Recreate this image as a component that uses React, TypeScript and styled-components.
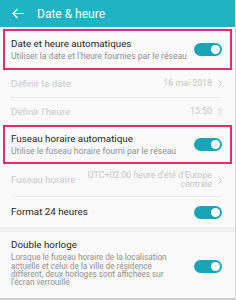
import styled, { createGlobalStyle } from 'styled-components';

const Global = createGlobalStyle`
  html, body {
    margin: 0;
    padding: 0;
    background: #fafafa;
  }
  body {
    font-family: Roboto, "Liberation Sans", sans-serif;
  }
`;

const Screen = styled.div`
  width: 236px;
  height: 300px;
  overflow: hidden;
  background: #fafafa;
  box-sizing: border-box;
  border-right: 1px solid #d8d8d8;
  border-bottom: 2px solid #cfcfcf;
`;

const Header = styled.div`
  height: 27px;
  background: #1fb3c3;
  display: flex;
  align-items: center;
  padding-left: 12px;
  gap: 13px;
  color: #fff;
  font-size: 12px;
  margin-bottom: 2px;
`;

const Highlight = styled.div<{ $h: number }>`
  margin: 0 3px;
  border: 2px solid #dc2f6c;
  height: ${(p) => p.$h}px;
  box-sizing: border-box;
  display: flex;
  align-items: center;
  padding: 0 8px 0 6px;
`;

const Row = styled.div<{ $h: number; $line?: boolean }>`
  height: ${(p) => p.$h}px;
  margin: 0 13px 0 11px;
  display: flex;
  align-items: center;
  box-sizing: border-box;
  border-bottom: ${(p) => (p.$line ? '1px solid #ececec' : 'none')};
`;

const Texts = styled.div`
  flex: 1;
  display: flex;
  flex-direction: column;
`;

const Title = styled.div<{ $muted?: boolean }>`
  font-size: 9.8px;
  line-height: 12px;
  color: ${(p) => (p.$muted ? '#c9c9c9' : '#1e1e1e')};
`;

const Sub = styled.div`
  font-size: 8.6px;
  line-height: 12px;
  color: #8f8f8f;
  white-space: nowrap;
`;

const Desc = styled.div`
  font-size: 8.2px;
  line-height: 8.4px;
  color: #8f8f8f;
  width: 168px;
  margin-top: 2px;
`;

const Value = styled.div`
  display: flex;
  align-items: center;
  gap: 6px;
  font-size: 8.8px;
  line-height: 9.5px;
  color: #c6c6c6;
  text-align: right;
`;

const Gap = styled.div`
  height: 5px;
  background: #efefef;
`;

const Track = styled.div<{ $drop?: number }>`
  width: 28px;
  height: 13px;
  border-radius: 7px;
  background: #18a5b6;
  display: flex;
  align-items: center;
  justify-content: flex-end;
  padding-right: 2px;
  box-sizing: border-box;
  flex-shrink: 0;
  margin-top: ${(p) => p.$drop ?? 0}px;
`;

const Knob = styled.div`
  width: 9px;
  height: 9px;
  border-radius: 50%;
  background: #fff;
`;

const Toggle = ({ drop }: { drop?: number }) => (
  <Track $drop={drop}>
    <Knob />
  </Track>
);

const Chevron = () => (
  <svg width="4" height="7" viewBox="0 0 4 7">
    <path d="M0.5 0.5 L3.5 3.5 L0.5 6.5" fill="none" stroke="#c6c6c6" strokeWidth="0.9" />
  </svg>
);

const BackArrow = () => (
  <svg width="12" height="11" viewBox="0 0 12 11">
    <path d="M12 5.5 H1 M5.5 1 L1 5.5 L5.5 10" fill="none" stroke="#fff" strokeWidth="1.2" />
  </svg>
);

export default function App() {
  return (
    <Screen>
      <Global />
      <Header>
        <BackArrow />
        <span>Date &amp; heure</span>
      </Header>

      <Highlight $h={41}>
        <Texts>
          <Title>Date et heure automatiques</Title>
          <Sub>Utiliser la date et l'heure fournies par le réseau</Sub>
        </Texts>
        <Toggle />
      </Highlight>

      <Row $h={28} $line>
        <Texts>
          <Title $muted>Définir la date</Title>
        </Texts>
        <Value>
          16 mai 2018 <Chevron />
        </Value>
      </Row>
      <Row $h={27}>
        <Texts>
          <Title $muted>Définir l'heure</Title>
        </Texts>
        <Value>
          15:50 <Chevron />
        </Value>
      </Row>

      <Highlight $h={39}>
        <Texts>
          <Title>Fuseau horaire automatique</Title>
          <Sub>Utilise le fuseau horaire fourni par le réseau</Sub>
        </Texts>
        <Toggle />
      </Highlight>

      <Row $h={33} $line>
        <Texts>
          <Title $muted>Fuseau horaire</Title>
        </Texts>
        <Value>
          <span>
            UTC+02:00 heure d'été d'Europe
            <br />
            centrale
          </span>
          <Chevron />
        </Value>
      </Row>
      <Row $h={30}>
        <Texts>
          <Title>Format 24 heures</Title>
        </Texts>
        <Toggle />
      </Row>

      <Gap />

      <Row $h={62}>
        <Texts>
          <Title>Double horloge</Title>
          <Desc>
            Lorsque le fuseau horaire de la localisation actuelle et celui de la ville de résidence
            différent, deux horloges sont affichées sur l'écran verrouillé
          </Desc>
        </Texts>
        <Toggle drop={7} />
      </Row>
    </Screen>
  );
}
